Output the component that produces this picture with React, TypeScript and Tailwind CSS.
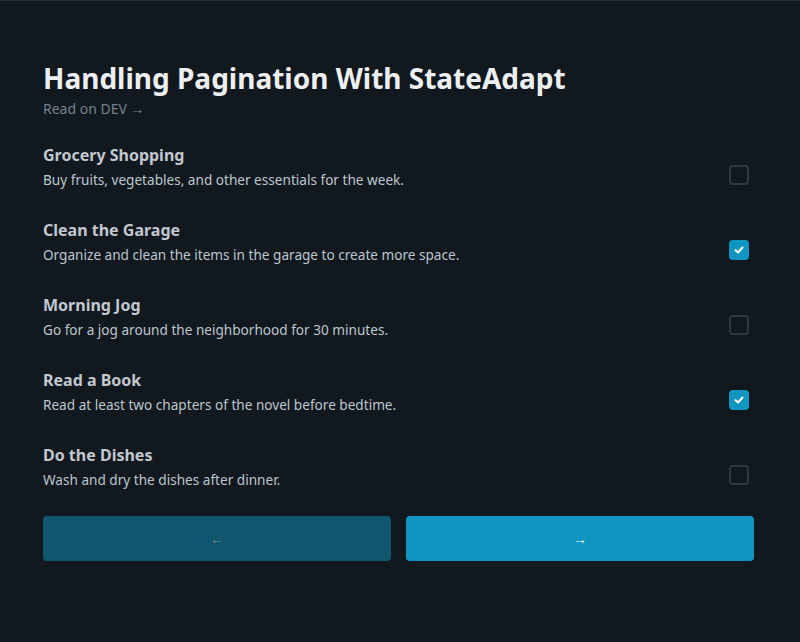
import { useState } from "react";

const todos = [
  { title: "Grocery Shopping", desc: "Buy fruits, vegetables, and other essentials for the week.", done: false },
  { title: "Clean the Garage", desc: "Organize and clean the items in the garage to create more space.", done: true },
  { title: "Morning Jog", desc: "Go for a jog around the neighborhood for 30 minutes.", done: false },
  { title: "Read a Book", desc: "Read at least two chapters of the novel before bedtime.", done: true },
  { title: "Do the Dishes", desc: "Wash and dry the dishes after dinner.", done: false },
];

function Checkbox({ checked, onChange }: { checked: boolean; onChange: () => void }) {
  return (
    <button
      onClick={onChange}
      className={`w-5 h-5 rounded-[4px] flex items-center justify-center shrink-0 ${
        checked ? "bg-[#1095c1] border-2 border-[#1095c1]" : "border-2 border-[#2c3a44]"
      }`}
    >
      {checked && (
        <svg width="12" height="12" viewBox="0 0 12 12" fill="none">
          <path d="M2.5 6.2 L5 8.5 L9.5 3.5" stroke="#fff" strokeWidth="2" strokeLinecap="round" strokeLinejoin="round" />
        </svg>
      )}
    </button>
  );
}

export default function App() {
  const [items, setItems] = useState(todos);

  return (
    <div className="min-h-[642px] bg-[#11191f] border-t border-[#222c34] font-['Noto_Sans',sans-serif]">
      <div className="pl-[43px] pt-[58px] pr-[46px]">
        <h1 className="text-[28px] leading-[38px] font-bold text-[#edf0f3]">Handling Pagination With StateAdapt</h1>
        <a className="block text-[14px] leading-[22px] text-[#73828c] mt-[1px]">Read on DEV →</a>

        <div className="mt-[23px] flex flex-col gap-[25px]">
          {items.map((t, i) => (
            <div key={t.title} className="flex items-start justify-between h-[50px]">
              <div>
                <h3 className="text-[16px] leading-[24px] font-bold text-[#c2c7d0]">{t.title}</h3>
                <p className="text-[13.6px] leading-[26px] text-[#bbc6ce]">{t.desc}</p>
              </div>
              <div className="mt-[22px] mr-[5px]">
                <Checkbox
                  checked={t.done}
                  onChange={() => setItems(items.map((x, j) => (j === i ? { ...x, done: !x.done } : x)))}
                />
              </div>
            </div>
          ))}
        </div>

        <div className="mt-[23px] grid grid-cols-2 gap-[15px]">
          <button disabled className="h-[45px] rounded-[4px] bg-[#11566f] text-[#7c8a93] text-[14px]">
            ←
          </button>
          <button className="h-[45px] rounded-[4px] bg-[#1095c1] text-white text-[14px]">→</button>
        </div>
      </div>
    </div>
  );
}
